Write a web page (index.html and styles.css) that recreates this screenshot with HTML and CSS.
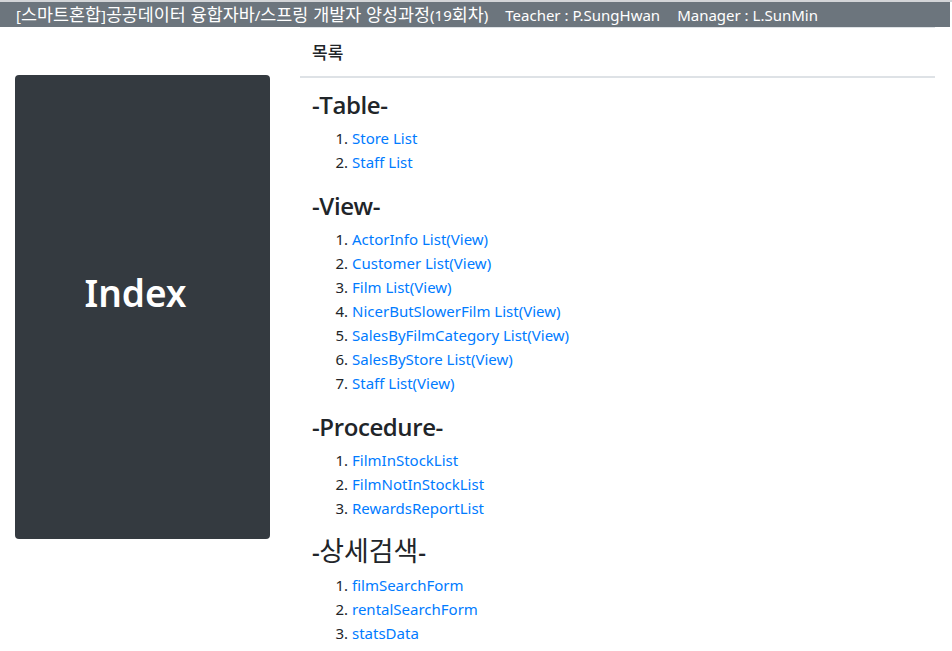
FILE: index.html
```html
<!DOCTYPE html>
<html lang="ko">
<head>
<meta charset="utf-8">
<title>Index</title>
<link rel="stylesheet" href="styles.css">
</head>
<body>
<header class="topbar">
  <span class="course">[<span class="ko">스마트혼합</span>]<span class="ko">공공데이터 융합자바</span>/<span class="ko">스프링 개발자 양성과정</span>(19<span class="ko">회차</span>)</span>
  <span class="person">Teacher : P.SungHwan</span>
  <span class="person">Manager : L.SunMin</span>
</header>
<div class="page">
  <aside class="side">
    <div class="index-box"><h1 class="index-title">Index</h1></div>
  </aside>
  <main class="content">
    <div class="table-head">목록</div>
    <div class="table-body">
      <h3 class="section">-Table-</h3>
      <ol class="links">
        <li><a href="#">Store List</a></li>
        <li><a href="#">Staff List</a></li>
      </ol>
      <h3 class="section">-View-</h3>
      <ol class="links">
        <li><a href="#">ActorInfo List(View)</a></li>
        <li><a href="#">Customer List(View)</a></li>
        <li><a href="#">Film List(View)</a></li>
        <li><a href="#">NicerButSlowerFilm List(View)</a></li>
        <li><a href="#">SalesByFilmCategory List(View)</a></li>
        <li><a href="#">SalesByStore List(View)</a></li>
        <li><a href="#">Staff List(View)</a></li>
      </ol>
      <h3 class="section">-Procedure-</h3>
      <ol class="links">
        <li><a href="#">FilmInStockList</a></li>
        <li><a href="#">FilmNotInStockList</a></li>
        <li><a href="#">RewardsReportList</a></li>
      </ol>
      <h3 class="section">-<span class="ko">상세검색</span>-</h3>
      <ol class="links">
        <li><a href="#">filmSearchForm</a></li>
        <li><a href="#">rentalSearchForm</a></li>
        <li><a href="#">statsData</a></li>
      </ol>
    </div>
  </main>
</div>
</body>
</html>
```
FILE: styles.css
```css
html, body {
  margin: 0;
  padding: 0;
  background: #fff;
}
body {
  font-family: "Noto Sans", "Noto Sans CJK KR", sans-serif;
  font-size: 15px;
  line-height: 24px;
  color: #212529;
  border-top: 2px solid #d3d5d8;
}
.ko {
  font-family: "Noto Sans CJK KR", sans-serif;
  font-size: 1.16em;
}
.topbar {
  width: 950px;
  height: 25px;
  background: #6c757d;
  color: #fff;
  display: flex;
  align-items: center;
  padding-left: 16px;
  box-sizing: border-box;
  white-space: nowrap;
}
.person {
  margin-left: 17px;
}
.page {
  display: flex;
  gap: 30px;
  padding: 0 17px 0 15px;
}
.side {
  width: 255px;
  flex: none;
  padding-top: 48px;
}
.index-box {
  height: 464px;
  background: #343a40;
  border-radius: 4px;
  display: flex;
  align-items: center;
  justify-content: center;
  padding: 0 14px 28px 0;
  box-sizing: border-box;
}
.index-title {
  margin: 0;
  color: #fff;
  font-size: 37px;
  line-height: 48px;
  font-weight: 600;
}
.content {
  width: 635px;
  flex: none;
}
.table-head {
  border-top: 1px solid #dee2e6;
  border-bottom: 2px solid #dee2e6;
  padding: 12px;
  font-size: 17px;
  font-weight: 500;
  font-family: "Noto Sans CJK KR", sans-serif;
}
.table-body {
  padding: 11px 12px 12px;
}
.section {
  margin: 0 0 6px;
  height: 31px;
  font-family: "Open Sans", "Noto Sans", sans-serif;
  font-size: 24px;
  letter-spacing: -0.4px;
  line-height: 31px;
  font-weight: 600;
}
.section .ko {
  font-size: 1.12em;
  font-weight: 400;
  line-height: 1;
  letter-spacing: 0;
}
.links {
  margin: 0 0 16px;
  padding-left: 40px;
}
.links a {
  color: #007bff;
  text-decoration: none;
}
```
